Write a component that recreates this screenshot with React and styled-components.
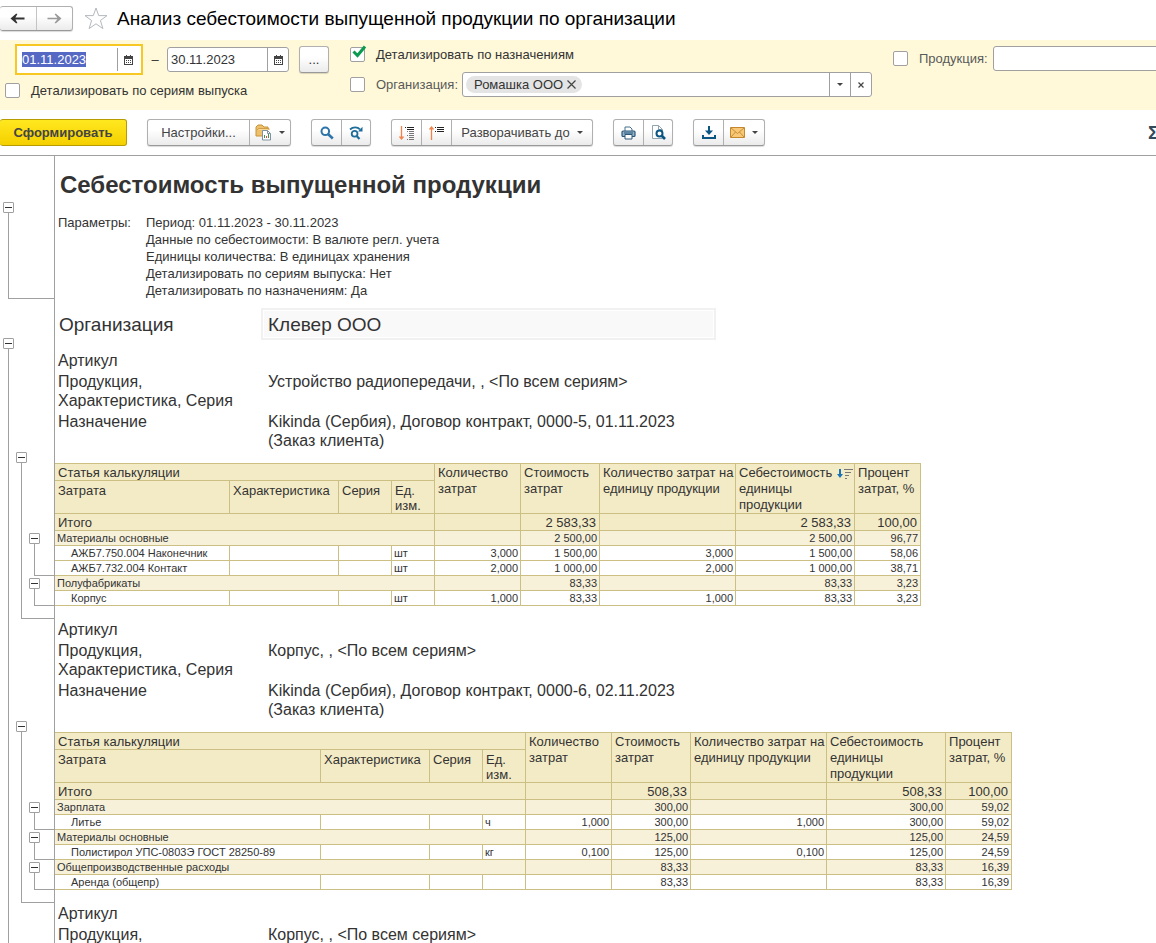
import React, { useEffect, useRef, useState } from "react";
import styled, { createGlobalStyle, css } from "styled-components";

const costTables = [
  {
    firstColumn: 175,
    sorted: true,
    product: "Устройство радиопередачи, , <По всем сериям>",
    purpose: "Kikinda (Сербия), Договор контракт, 0000-5, 01.11.2023 (Заказ клиента)",
    total: ["", "2 583,33", "", "2 583,33", "100,00"],
    rows: [
      { group: true, name: "Материалы основные", values: ["", "2 500,00", "", "2 500,00", "96,77"] },
      { name: "АЖБ7.750.004 Наконечник", unit: "шт", values: ["3,000", "1 500,00", "3,000", "1 500,00", "58,06"] },
      { name: "АЖБ7.732.004 Контакт", unit: "шт", values: ["2,000", "1 000,00", "2,000", "1 000,00", "38,71"] },
      { group: true, name: "Полуфабрикаты", values: ["", "83,33", "", "83,33", "3,23"] },
      { name: "Корпус", unit: "шт", values: ["1,000", "83,33", "1,000", "83,33", "3,23"] },
    ],
  },
  {
    firstColumn: 266,
    product: "Корпус, , <По всем сериям>",
    purpose: "Kikinda (Сербия), Договор контракт, 0000-6, 02.11.2023 (Заказ клиента)",
    total: ["", "508,33", "", "508,33", "100,00"],
    rows: [
      { group: true, name: "Зарплата", values: ["", "300,00", "", "300,00", "59,02"] },
      { name: "Литье", unit: "ч", values: ["1,000", "300,00", "1,000", "300,00", "59,02"] },
      { group: true, name: "Материалы основные", values: ["", "125,00", "", "125,00", "24,59"] },
      { name: "Полистирол УПС-0803Э ГОСТ 28250-89", unit: "кг", values: ["0,100", "125,00", "0,100", "125,00", "24,59"] },
      { group: true, name: "Общепроизводственные расходы", values: ["", "83,33", "", "83,33", "16,39"] },
      { name: "Аренда (общепр)", unit: "", values: ["", "83,33", "", "83,33", "16,39"] },
    ],
  },
];

const columnWidths = [109, 53, 43, 86, 79, 136, 119, 66];

const parameters = [
  "Период: 01.11.2023 - 30.11.2023",
  "Данные по себестоимости: В валюте регл. учета",
  "Единицы количества: В единицах хранения",
  "Детализировать по сериям выпуска: Нет",
  "Детализировать по назначениям: Да",
];

// one list per nesting level; a branch without size runs to the end of the report
const outline = [
  [{ gap: 46, size: 97 }, { gap: 39 }],
  [{ gap: 296, size: 167 }, { gap: 102, size: 182 }],
  [
    { gap: 377, size: 43 },
    { gap: 2, size: 28 },
    { gap: 196, size: 28 },
    { gap: 2, size: 28 },
    { gap: 2, size: 28 },
  ],
];

const ArrowIcon = ({ back }) => (
  <svg width="15" height="11" viewBox="0 0 15 11" fill="currentColor">
    {back ? (
      <path d="M0.5 5.5L6 0.8H7.2V1.6L5.4 4.5H14.5V6.5H5.4L7.2 9.4V10.2H6Z" />
    ) : (
      <path d="M14.5 5.5L9 0.8H7.8V1.6L10.4 4.7H0.5V6.3H10.4L7.8 9.4V10.2H9Z" />
    )}
  </svg>
);

const StarIcon = () => (
  <svg width="24" height="23" viewBox="0 0 24 23" fill="#fff" stroke="#b4b8bd" strokeWidth="1">
    <path d="M12 1L14.7 8.6H23L16.4 13.5L18.9 21.6L12 16.8L5.1 21.6L7.6 13.5L1 8.6H9.3Z" />
  </svg>
);

const CalendarIcon = () => (
  <svg width="9" height="10" viewBox="0 0 9 10" shapeRendering="crispEdges">
    <path d="M0 1H9V10H0Z" fill="#444" />
    <path d="M2 0H3V1H2ZM6 0H7V1H6Z" fill="#444" />
    <path d="M1 4H8V9H1Z" fill="#fff" />
    <path d="M2 5H3V6H2ZM4 5H5V6H4ZM6 5H7V6H6ZM2 7H3V8H2ZM4 7H5V8H4ZM6 7H7V8H6Z" fill="#444" />
  </svg>
);

const CaretIcon = () => (
  <svg width="6" height="3" viewBox="0 0 6 3">
    <path d="M0 0H6L3 3Z" fill="#444" />
  </svg>
);

const CrossIcon = ({ size }) => (
  <svg width={size} height={size} viewBox={`0 0 ${size} ${size}`} fill="none" stroke="#444" strokeWidth="1.2">
    <path d={`M0.5 0.5L${size - 0.5} ${size - 0.5}M${size - 0.5} 0.5L0.5 ${size - 0.5}`} />
  </svg>
);

const CheckIcon = () => (
  <svg width="15" height="14" viewBox="0 0 15 14" fill="none" stroke="#0b9a50" strokeWidth="3">
    <path d="M1.5 6.5L5.5 10.5L13 1.5" />
  </svg>
);

const VariantsIcon = () => (
  <svg width="17" height="17" viewBox="0 0 17 17">
    <path d="M1 3L3 1H7L9 3H13V6L8 7V12H1Z" fill="#edc16c" stroke="#c8923a" />
    <path d="M1.5 6L4 4.5H14V6" fill="#f7d794" stroke="#c8923a" strokeWidth="0.8" />
    <path d="M7.5 6.5H12.5L15.5 9.5V16H7.5Z" fill="#fff" stroke="#7f93a2" />
    <path d="M12.5 6.5V9.5H15.5" fill="none" stroke="#7f93a2" />
    <path d="M9.5 14V11M13.5 14V10" stroke="#3f9150" />
    <path d="M11.5 14V12" stroke="#e1443f" />
  </svg>
);

const SearchIcon = () => (
  <svg width="14" height="14" viewBox="0 0 14 14" fill="none" stroke="#2d74a9" strokeWidth="2">
    <circle cx="5.3" cy="5.3" r="3.8" />
    <path d="M8 8L12.8 12.5" strokeWidth="2.6" />
  </svg>
);

const SearchNextIcon = () => (
  <svg width="14" height="14" viewBox="0 0 14 14" fill="none" stroke="#1f6d9b" strokeWidth="1.8">
    <path d="M1 3.5C4 0.5 8.5 0.6 11 3.4" />
    <path d="M13.5 0.8V5.4H9Z" fill="#1f6d9b" stroke="none" />
    <circle cx="5.6" cy="7.8" r="2.9" />
    <path d="M7.7 10L10.5 13" strokeWidth="2.2" />
  </svg>
);

const ExpandIcon = () => (
  <svg width="16" height="16" viewBox="0 0 16 16" fill="none">
    <path d="M2.5 1V14M0.5 11.5L2.5 14L4.5 11.5" stroke="#f0824a" strokeWidth="1.3" />
    <path d="M6 2.5H7M8 2.5H15M8 4.5H15" stroke="#222" />
    <path d="M8 6.5H9M10 6.5H15M10 8.5H15M8 10.5H9M10 10.5H15M10 12.5H15M8 14.5H9M10 14.5H15" stroke="#777" />
  </svg>
);

const CollapseIcon = () => (
  <svg width="16" height="16" viewBox="0 0 16 16" fill="none">
    <path d="M2.5 15V2M0.5 4.5L2.5 2L4.5 4.5" stroke="#f0824a" strokeWidth="1.3" />
    <path d="M6 2.5H7M8 2.5H15M8 4.5H15M6 6.5H7M8 6.5H15" stroke="#222" />
  </svg>
);

const PrintIcon = () => (
  <svg width="15" height="14" viewBox="0 0 15 14">
    <path d="M4 5V1H9L11 3V5" fill="#fff" stroke="#46708f" />
    <rect x="1" y="5" width="13" height="5.5" rx="1" fill="#8fb1c9" stroke="#2d5878" strokeWidth="1.2" />
    <path d="M3 7H12" stroke="#2d5878" />
    <path d="M4 8.5H11V13H4Z" fill="#fff" stroke="#2d5878" />
  </svg>
);

const PreviewIcon = () => (
  <svg width="15" height="15" viewBox="0 0 15 15">
    <path d="M1.5 0.5H7.5L11.5 4.5V13.5H1.5Z" fill="#fff" stroke="#91a4b1" />
    <path d="M7.5 0.5V4.5H11.5" fill="none" stroke="#91a4b1" />
    <circle cx="8.5" cy="8.5" r="3" fill="#fff" stroke="#0b5583" strokeWidth="2" />
    <path d="M10.5 10.5L14 14" stroke="#0b5583" strokeWidth="2.6" />
  </svg>
);

const SaveIcon = () => (
  <svg width="14" height="13" viewBox="0 0 14 13" fill="none" stroke="#0b5583" strokeWidth="2">
    <path d="M7 0V7M0 12H14" />
    <path d="M3 4.5H11L7 9Z" fill="#0b5583" stroke="none" />
    <path d="M1 9V12M13 9V12" />
  </svg>
);

const MailIcon = () => (
  <svg width="15" height="11" viewBox="0 0 15 11" stroke="#c4872c">
    <path d="M0.5 0.5H14.5V10.5H0.5Z" fill="#f6c877" />
    <path d="M1 1L7.5 6.5L14 1M1 10L5.5 5M14 10L9.5 5" fill="none" strokeWidth="0.9" />
  </svg>
);

const SortIcon = () => (
  <svg width="17" height="11" viewBox="0 0 17 11">
    <path d="M2 1H4V6H6L3 10L0 6H2Z" fill="#1a73b5" />
    <path d="M8 1.5H16M8 4.5H14M8 7.5H12M8 10.5H10" stroke="#777" />
    <path d="M7 1.5H8" stroke="#777" />
  </svg>
);

const CheckField = ({ label, muted, ...rest }) => (
  <CheckLabel $muted={muted}>
    <CheckBox>
      <input type="checkbox" {...rest} />
      <CheckIcon />
    </CheckBox>
    {label}
  </CheckLabel>
);

const DateField = ({ active, label, inputRef, ...rest }) => (
  <DateFrame $active={active}>
    <DateBox $active={active}>
      <input ref={inputRef} type="text" aria-label={label} {...rest} />
      <InnerButton type="button" aria-label="Календарь">
        <CalendarIcon />
      </InnerButton>
    </DateBox>
  </DateFrame>
);

const Outline = () => (
  <OutlineStyled>
    {outline.map((branches, depth) => (
      <Lane key={depth} $depth={depth}>
        {branches.map((branch, index) => (
          <Branch key={index} $gap={branch.gap} $size={branch.size}>
            <Toggle type="button" aria-label="Свернуть" />
            <BranchLine $open={!branch.size} />
          </Branch>
        ))}
      </Lane>
    ))}
  </OutlineStyled>
);

const Facts = ({ product, purpose }) => (
  <FactList>
    <dt>Артикул</dt>
    <dd />
    <dt>Продукция, Характеристика, Серия</dt>
    <dd>{product}</dd>
    {purpose && (
      <>
        <dt>Назначение</dt>
        <dd>{purpose}</dd>
      </>
    )}
  </FactList>
);

const CostTable = ({ table }) => (
  <CostTableStyled>
    <colgroup>
      {[table.firstColumn, ...columnWidths].map((width, index) => (
        <col key={index} style={{ width }} />
      ))}
    </colgroup>
    <thead>
      <tr>
        <th colSpan={4}>Статья калькуляции</th>
        <th rowSpan={2}>Количество затрат</th>
        <th rowSpan={2}>Стоимость затрат</th>
        <th rowSpan={2}>Количество затрат на единицу продукции</th>
        <th rowSpan={2}>
          <SortableHead>
            Себестоимость единицы продукции
            {table.sorted && <SortIcon />}
          </SortableHead>
        </th>
        <th rowSpan={2}>Процент затрат, %</th>
      </tr>
      <tr className="second">
        <th>Затрата</th>
        <th>Характеристика</th>
        <th>Серия</th>
        <th>Ед. изм.</th>
      </tr>
    </thead>
    <tbody>
      <tr className="total">
        <td colSpan={4}>Итого</td>
        {table.total.map((value, index) => (
          <NumberCell key={index} $total>{value}</NumberCell>
        ))}
      </tr>
      {table.rows.map((row) => (
        <tr key={row.name} className={row.group ? "group" : "detail"}>
          <td colSpan={row.group ? 4 : 1}>{row.name}</td>
          {!row.group && (
            <>
              <td />
              <td />
              <td>{row.unit}</td>
            </>
          )}
          {row.values.map((value, index) => (
            <NumberCell key={index}>{value}</NumberCell>
          ))}
        </tr>
      ))}
    </tbody>
  </CostTableStyled>
);

const App = () => {
  const [dateFrom, setDateFrom] = useState("01.11.2023");
  const [dateTo, setDateTo] = useState("30.11.2023");
  const dateFromRef = useRef(null);

  useEffect(() => {
    dateFromRef.current.focus();
    dateFromRef.current.select();
  }, []);

  return (
    <Page>
      <GlobalStyle />
      <TitleBar>
        <NavGroup>
          <button type="button" aria-label="Назад">
            <ArrowIcon back />
          </button>
          <button type="button" aria-label="Вперед" disabled>
            <ArrowIcon />
          </button>
        </NavGroup>
        <StarButton type="button" aria-label="Избранное">
          <StarIcon />
        </StarButton>
        <h1>Анализ себестоимости выпущенной продукции по организации</h1>
      </TitleBar>

      <Filters>
        <PeriodColumn>
          <PeriodRow>
            <DateField
              active
              label="Начало периода"
              inputRef={dateFromRef}
              value={dateFrom}
              onChange={(e) => setDateFrom(e.target.value)}
            />
            <Dash>–</Dash>
            <DateField
              label="Конец периода"
              value={dateTo}
              onChange={(e) => setDateTo(e.target.value)}
            />
            <MoreButton type="button">...</MoreButton>
          </PeriodRow>
          <CheckField label="Детализировать по сериям выпуска" />
        </PeriodColumn>
        <MiddleColumn>
          <FilterRow>
            <CheckField label="Детализировать по назначениям" defaultChecked />
          </FilterRow>
          <FilterRow>
            <CheckField label="Организация:" muted />
            <ComboBox>
              <Chip>
                Ромашка ООО
                <button type="button" aria-label="Убрать">
                  <CrossIcon size={9} />
                </button>
              </Chip>
              <input type="text" aria-label="Организация" />
              <InnerButton type="button" aria-label="Выбрать">
                <CaretIcon />
              </InnerButton>
              <InnerButton type="button" aria-label="Очистить">
                <CrossIcon size={6} />
              </InnerButton>
            </ComboBox>
          </FilterRow>
        </MiddleColumn>
        <ProductColumn>
          <CheckField label="Продукция:" muted />
          <ProductInput type="text" aria-label="Продукция" />
        </ProductColumn>
      </Filters>

      <Toolbar>
        <RunButton type="button">Сформировать</RunButton>
        <ButtonGroup>
          <ToolButton type="button" $width={101}>Настройки...</ToolButton>
          <ToolButton type="button" $width={41} aria-label="Варианты отчета">
            <VariantsIcon />
            <CaretIcon />
          </ToolButton>
        </ButtonGroup>
        <ButtonGroup>
          <ToolButton type="button" aria-label="Найти">
            <SearchIcon />
          </ToolButton>
          <ToolButton type="button" aria-label="Найти далее">
            <SearchNextIcon />
          </ToolButton>
        </ButtonGroup>
        <ButtonGroup>
          <ToolButton type="button" aria-label="Развернуть">
            <ExpandIcon />
          </ToolButton>
          <ToolButton type="button" $width={30} aria-label="Свернуть все">
            <CollapseIcon />
          </ToolButton>
          <ToolButton type="button" $width={141}>
            Разворачивать до
            <CaretIcon />
          </ToolButton>
        </ButtonGroup>
        <ButtonGroup>
          <ToolButton type="button" aria-label="Печать">
            <PrintIcon />
          </ToolButton>
          <ToolButton type="button" aria-label="Просмотр">
            <PreviewIcon />
          </ToolButton>
        </ButtonGroup>
        <ButtonGroup>
          <ToolButton type="button" aria-label="Сохранить">
            <SaveIcon />
          </ToolButton>
          <ToolButton type="button" $width={41} aria-label="Отправить">
            <MailIcon />
            <CaretIcon />
          </ToolButton>
        </ButtonGroup>
        <SumButton type="button" aria-label="Сумма">Σ</SumButton>
      </Toolbar>

      <Report>
        <Outline />
        <Sheet>
          <h2>Себестоимость выпущенной продукции</h2>
          <Parameters>
            <span>Параметры:</span>
            <ul>
              {parameters.map((line) => (
                <li key={line}>{line}</li>
              ))}
            </ul>
          </Parameters>
          <Organization>
            <span>Организация</span>
            <strong>Клевер ООО</strong>
          </Organization>
          {costTables.map((table) => (
            <section key={table.product}>
              <Facts product={table.product} purpose={table.purpose} />
              <CostTable table={table} />
            </section>
          ))}
          <Facts product="Корпус, , <По всем сериям>" />
        </Sheet>
      </Report>
    </Page>
  );
};

const GlobalStyle = createGlobalStyle`
  * {
    box-sizing: border-box;
  }

  body {
    margin: 0;
    background: #fff;
    overflow: hidden;
  }

  body, button, input {
    font-family: "Liberation Sans", Arial, sans-serif;
    font-size: 13px;
    color: #333;
  }

  button {
    padding: 0;
    cursor: pointer;
  }

  h1, h2, ul, dl, dd {
    margin: 0;
    padding: 0;
  }

  svg {
    flex: none;
    display: block;
  }
`;

const Page = styled.div`
  height: 100vh;
  display: flex;
  flex-direction: column;
  overflow: hidden;
`;

const raised = css`
  border: 1px solid #b0b0b0;
  border-bottom-color: #999;
  border-radius: 3px;
  background: linear-gradient(#fff 40%, #ebebeb);
  box-shadow: 0 1px 1px rgba(0, 0, 0, 0.15);
`;

const TitleBar = styled.header`
  height: 40px;
  flex: none;
  display: flex;
  align-items: center;
  padding-bottom: 3px;

  h1 {
    font-size: 19px;
    font-weight: 400;
    color: #000;
    white-space: nowrap;
  }
`;

const NavGroup = styled.div`
  ${raised}
  width: 73px;
  height: 25px;
  display: flex;
  border-left: none;

  button {
    flex: 1;
    display: flex;
    align-items: center;
    justify-content: center;
    background: none;
    border: none;
    color: #333;

    &:disabled {
      border-left: 1px solid #c4c4c4;
      color: #999;
    }
  }
`;

const StarButton = styled.button`
  margin: 0 9px 0 11px;
  background: none;
  border: none;
`;

const Filters = styled.div`
  flex: none;
  height: 70px;
  display: flex;
  background: #fff9d9;
  overflow: hidden;
`;

const PeriodColumn = styled.div`
  width: 350px;
  padding: 4px 0 0 5px;
  display: flex;
  flex-direction: column;
  gap: 8px;
`;

const PeriodRow = styled.div`
  display: flex;
  align-items: center;
  padding-left: 10px;
`;

const DateFrame = styled.div`
  width: ${({ $active }) => ($active ? "128px" : "122px")};
  border: ${({ $active }) => ($active ? "2px solid #f8c822" : "none")};
  border-radius: ${({ $active }) => ($active ? "0" : "3px")};
  background: #fff;
`;

const DateBox = styled.div`
  height: ${({ $active }) => ($active ? "27px" : "25px")};
  padding: ${({ $active }) => ($active ? "2px 3px" : "0")};
  display: flex;
  border: ${({ $active }) => ($active ? "none" : "1px solid #a0a0a0")};
  border-radius: 3px;

  input {
    flex: 1;
    min-width: 0;
    padding: 0 0 0 ${({ $active }) => ($active ? "2px" : "3px")};
    border: none;
    outline: none;
    background: none;

    &::selection {
      background: #5468c4;
      color: #fff;
    }
  }
`;

const InnerButton = styled.button`
  width: 21px;
  display: flex;
  align-items: center;
  justify-content: center;
  background: none;
  border: none;
  border-left: 1px solid #a0a0a0;
`;

const Dash = styled.span`
  width: 24px;
  text-align: center;
`;

const MoreButton = styled.button`
  ${raised}
  width: 30px;
  height: 27px;
  margin-left: 10px;
`;

const CheckLabel = styled.label`
  display: flex;
  align-items: center;
  gap: 11px;
  white-space: nowrap;
  color: ${({ $muted }) => ($muted ? "#595959" : "#333")};
`;

const CheckBox = styled.span`
  position: relative;
  width: 15px;
  height: 15px;

  input {
    appearance: none;
    display: block;
    width: 15px;
    height: 15px;
    margin: 0;
    border: 1px solid #a0a0a0;
    border-radius: 2px;
    background: #fff;
  }

  svg {
    position: absolute;
    left: 2px;
    top: -2px;
    display: none;
    pointer-events: none;
  }

  input:checked + svg {
    display: block;
  }
`;

const MiddleColumn = styled.div`
  width: 522px;
  padding-top: 2px;
  display: flex;
  flex-direction: column;
  gap: 5px;
`;

const FilterRow = styled.div`
  height: 25px;
  display: flex;
  align-items: center;
  gap: 4px;
`;

const ComboBox = styled.div`
  flex: 1;
  height: 25px;
  padding-left: 3px;
  display: flex;
  border: 1px solid #a0a0a0;
  border-radius: 3px;
  background: #fff;

  input {
    flex: 1;
    min-width: 0;
    border: none;
    outline: none;
    background: none;
  }
`;

const Chip = styled.span`
  height: 17px;
  margin-top: 3px;
  padding: 0 6px 0 8px;
  display: flex;
  align-items: center;
  gap: 4px;
  border-radius: 9px;
  background: #e4e4e4;
  white-space: nowrap;

  button {
    background: none;
    border: none;
  }
`;

const ProductColumn = styled.div`
  flex: 1;
  height: 37px;
  min-width: 0;
  padding-left: 21px;
  margin-right: -4px;
  display: flex;
  align-items: center;
  gap: 5px;
`;

const ProductInput = styled.input`
  flex: 1;
  min-width: 0;
  height: 25px;
  border: 1px solid #a0a0a0;
  border-radius: 3px;
  background: #fff;
`;

const Toolbar = styled.div`
  flex: none;
  display: flex;
  gap: 20px;
  padding: 9px 0;
  border-bottom: 1px solid #a0a0a0;
`;

const RunButton = styled.button`
  width: 127px;
  height: 27px;
  border: 1px solid #b79b00;
  border-left: none;
  border-radius: 3px;
  background: linear-gradient(#ffe81f, #f5d000);
  font-weight: 700;
  color: #444;
`;

const ButtonGroup = styled.div`
  ${raised}
  flex: none;
  height: 27px;
  display: flex;
`;

const ToolButton = styled.button`
  width: ${({ $width }) => $width || 29}px;
  display: flex;
  align-items: center;
  justify-content: center;
  gap: 7px;
  background: none;
  border: none;
  white-space: nowrap;
  color: #444;

  &:not(:first-child) {
    border-left: 1px solid #b0b0b0;
  }
`;

const SumButton = styled.button`
  width: 8px;
  margin-left: auto;
  overflow: hidden;
  background: none;
  border: none;
  text-align: left;
  font-size: 19px;
  font-weight: 700;
  color: #34495a;
`;

const Report = styled.main`
  flex: 1;
  min-height: 0;
  display: flex;
  overflow: hidden;
`;

const OutlineStyled = styled.div`
  flex: none;
  width: 55px;
  display: grid;
  border-right: 1px solid #a0a0a0;
`;

const Lane = styled.div`
  grid-area: 1 / 1;
  padding-left: ${({ $depth }) => 3 + $depth * 13}px;
  display: flex;
  flex-direction: column;
  pointer-events: none;
`;

const Branch = styled.div`
  margin-top: ${({ $gap }) => $gap}px;
  flex: ${({ $size }) => ($size ? `0 0 ${$size}px` : "1")};
  display: flex;
  flex-direction: column;
`;

const Toggle = styled.button`
  width: 11px;
  height: 11px;
  flex: none;
  display: flex;
  align-items: center;
  justify-content: center;
  border: 1px solid #a0a0a0;
  border-radius: 1px;
  background: #fff;
  pointer-events: auto;

  &::before {
    content: "";
    width: 7px;
    height: 1px;
    background: #333;
  }
`;

const BranchLine = styled.div`
  flex: 1;
  margin-left: 5px;
  border-left: 1px solid #a0a0a0;
  border-bottom: ${({ $open }) => ($open ? "none" : "1px solid #a0a0a0")};
`;

const Sheet = styled.div`
  flex: 1;
  min-width: 0;

  h2 {
    padding: 14px 0 15px 5px;
    font-size: 24px;
    line-height: 29px;
    white-space: nowrap;
  }
`;

const Parameters = styled.div`
  display: flex;
  padding-left: 3px;
  line-height: 17px;

  span {
    width: 88px;
  }

  ul {
    list-style: none;
  }
`;

const Organization = styled.div`
  display: flex;
  align-items: center;
  padding: 9px 0 11px 4px;
  font-size: 19px;
  line-height: 30px;

  span {
    width: 202px;
    padding-top: 2px;
  }

  strong {
    width: 455px;
    height: 32px;
    padding-left: 5px;
    border: 2px solid #f1f1f1;
    background: #f9f9f9;
    box-shadow: inset 0 0 0 1px #fff;
    font-weight: 400;
  }
`;

const FactList = styled.dl`
  display: grid;
  grid-template-columns: 210px 440px;
  row-gap: 2px;
  padding: 0 0 13px 3px;
  font-size: 16px;
  line-height: 19px;

  dt {
    padding-right: 30px;
  }
`;

const CostTableStyled = styled.table`
  table-layout: fixed;
  width: 0;
  margin-bottom: 14px;
  border-collapse: separate;
  border-spacing: 0;
  border-top: 1px solid #cbbf83;

  th, td {
    padding: 1px 0 0 3px;
    border-right: 1px solid #cbbf83;
    border-bottom: 1px solid #cbbf83;
    text-align: left;
    vertical-align: top;
    font-weight: 400;
    line-height: 16px;
  }

  th, .total td {
    background: #f3ebc5;
  }

  thead tr:first-child th:first-child,
  .total td {
    line-height: 15px;
  }

  .second th {
    padding-top: 2px;
    line-height: 15px;
  }

  .group td, .detail td {
    padding-top: 0;
    padding-left: 2px;
    font-size: 11px;
    line-height: 14px;
    white-space: nowrap;
    height: 15px;
  }

  .group td {
    background: #f7f1da;
  }

  .detail td:first-child {
    padding-left: 16px;
  }
`;

const NumberCell = styled.td`
  && {
    padding-right: ${({ $total }) => ($total ? 3 : 2)}px;
    text-align: right;
  }
`;

const SortableHead = styled.span`
  display: block;
  position: relative;

  svg {
    position: absolute;
    right: 0;
    top: 3px;
  }
`;

export default App;
